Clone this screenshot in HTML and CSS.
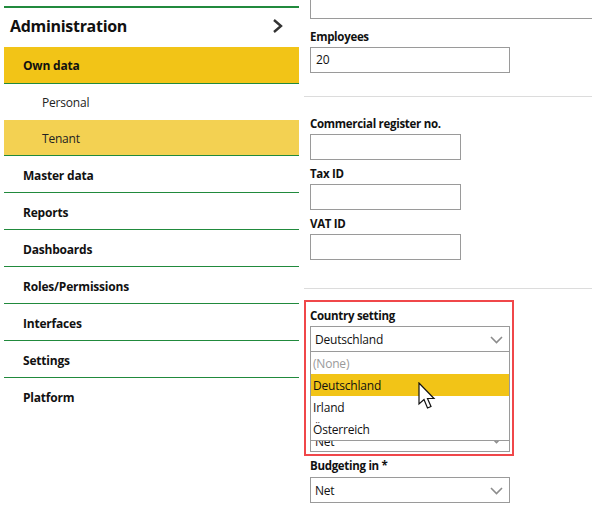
FILE: index.html
```html
<!DOCTYPE html>
<html>
<head>
<meta charset="utf-8">
<link rel="stylesheet" href="styles.css">
</head>
<body>
<div class="page">
  <nav class="sidebar">
    <div class="side-header">
      <span class="side-title">Administration</span>
      <svg class="side-chevron" width="12" height="16" viewBox="0 0 12 16"><polyline points="2,2 9,8 2,14" fill="none" stroke="#333" stroke-width="2.4"/></svg>
    </div>
    <div class="nav-item active">Own data</div>
    <div class="nav-sub">Personal</div>
    <div class="nav-sub selected">Tenant</div>
    <div class="nav-item">Master data</div>
    <div class="nav-item">Reports</div>
    <div class="nav-item">Dashboards</div>
    <div class="nav-item">Roles/Permissions</div>
    <div class="nav-item">Interfaces</div>
    <div class="nav-item">Settings</div>
    <div class="nav-item last">Platform</div>
  </nav>
  <main class="content">
    <div class="field-pad">
      <div class="input cut"></div>
      <label class="label first">Employees</label>
      <div class="input wide">20</div>
    </div>
    <hr class="sep first-sep">
    <div class="field-pad group2">
      <label class="label">Commercial register no.</label>
      <div class="input narrow"></div>
      <label class="label spaced">Tax ID</label>
      <div class="input narrow"></div>
      <label class="label spaced">VAT ID</label>
      <div class="input narrow"></div>
    </div>
    <hr class="sep second-sep">
    <div class="highlight-box">
      <label class="label">Country setting</label>
      <div class="select wide">
        <span>Deutschland</span>
        <svg class="sel-chevron" width="13" height="8" viewBox="0 0 13 8"><polyline points="1,1 6.5,6.5 12,1" fill="none" stroke="#8c8c8c" stroke-width="1.6"/></svg>
      </div>
      <div class="select wide hidden-select">
        <span class="net-peek">Net</span>
        <svg class="sel-chevron" width="13" height="8" viewBox="0 0 13 8"><polyline points="1,1 6.5,6.5 12,1" fill="none" stroke="#8c8c8c" stroke-width="1.6"/></svg>
      </div>
      <ul class="dropdown">
        <li class="opt none">(None)</li>
        <li class="opt hover">Deutschland</li>
        <li class="opt">Irland</li>
        <li class="opt">Österreich</li>
      </ul>
      <svg class="cursor" width="18" height="28" viewBox="0 0 18 28"><path d="M1,1 L1,22 L6,17.5 L9.5,26 L13,24.5 L9.5,16.5 L16,16.5 Z" fill="#fff" stroke="#111" stroke-width="1.2" stroke-linejoin="miter"/></svg>
    </div>
    <div class="field-pad">
      <label class="label budget">Budgeting in *</label>
      <div class="select wide">
        <span>Net</span>
        <svg class="sel-chevron" width="13" height="8" viewBox="0 0 13 8"><polyline points="1,1 6.5,6.5 12,1" fill="none" stroke="#8c8c8c" stroke-width="1.6"/></svg>
      </div>
    </div>
  </main>
</div>
</body>
</html>
```
FILE: styles.css
```css
* { box-sizing: border-box; }
html, body { margin: 0; padding: 0; background: #fff; }
body {
  width: 592px;
  height: 510px;
  overflow: hidden;
  font-family: "Open Sans", "Noto Sans", sans-serif;
  color: #111;
}
.page { display: flex; align-items: flex-start; width: 592px; overflow: hidden; }

.sidebar {
  width: 295px;
  margin-left: 4px;
  margin-top: 6px;
  border-top: 2px solid #218a3d;
  flex-shrink: 0;
}
.side-header {
  height: 39px;
  display: flex;
  align-items: center;
  justify-content: space-between;
  padding-left: 6px;
  padding-right: 15px;
  padding-bottom: 4px;
}
.side-title { font-size: 16px; font-weight: 700; letter-spacing: -0.3px; color: #111; }
.side-chevron { display: block; }

.nav-item {
  height: 37px;
  display: flex;
  align-items: center;
  padding-left: 19px;
  padding-top: 2px;
  font-size: 12px;
  font-weight: 700;
  border-bottom: 1px solid #218a3d;
  letter-spacing: -0.2px;
}
.nav-item.active { background: #f2c417; padding-top: 1px; }
.nav-item.last { border-bottom: none; }
.nav-sub {
  height: 36px;
  display: flex;
  align-items: center;
  padding-left: 38px;
  font-size: 12px;
  letter-spacing: -0.2px;
  color: #222;
}
.nav-sub.selected { background: #f3d152; border-bottom: 1px solid #218a3d; padding-top: 1px; }

.content { flex: 1; min-width: 0; padding-left: 5px; position: relative; }
.field-pad { padding-left: 6px; }
.label {
  display: block;
  font-size: 11.5px;
  font-weight: 700;
  line-height: 16px;
  letter-spacing: -0.3px;
  margin-bottom: 2px;
  color: #111;
}
.label.first { margin-top: 10px; }
.label.spaced { margin-top: 6px; }
.label.budget { margin-top: 2px; margin-bottom: 3px; }

.input, .select {
  height: 26px;
  border: 1px solid #9a9a9a;
  background: #fff;
  font-size: 12px;
  line-height: 24px;
  padding-left: 5px;
  letter-spacing: -0.2px;
  color: #111;
}
.input.cut { width: 320px; margin-top: -7px; }
.wide { width: 200px; }
.narrow { width: 151px; }
.select { display: flex; align-items: center; justify-content: space-between; padding-right: 6px; padding-left: 4px; padding-top: 1px; }
.sel-chevron { display: block; }

.sep { border: none; border-top: 1px solid #dcdcdc; margin: 0; }
.first-sep { margin-top: 23px; }
.group2 { padding-top: 19px; }
.second-sep { margin-top: 28px; }

.highlight-box {
  position: relative;
  margin-top: 11px;
  width: 210px;
  height: 156px;
  border: 2px solid #f0474a;
  padding: 6px 0 0 4px;
}
.hidden-select { margin-top: 74px; }
.net-peek { position: relative; top: 2px; }
.dropdown {
  position: absolute;
  left: 4px;
  top: 50px;
  width: 200px;
  margin: 0;
  padding: 0;
  list-style: none;
  background: #fff;
  border: 1px solid #9a9a9a;
  border-top: none;
  z-index: 1;
}
.opt {
  height: 22px;
  line-height: 22px;
  padding-left: 2px;
  padding-top: 1px;
  font-size: 12px;
  letter-spacing: -0.2px;
  color: #111;
}
.opt.none { color: #9a9a9a; }
.opt.hover { background: #f2c417; }
.cursor { position: absolute; left: 112px; top: 80px; z-index: 2; }
```
